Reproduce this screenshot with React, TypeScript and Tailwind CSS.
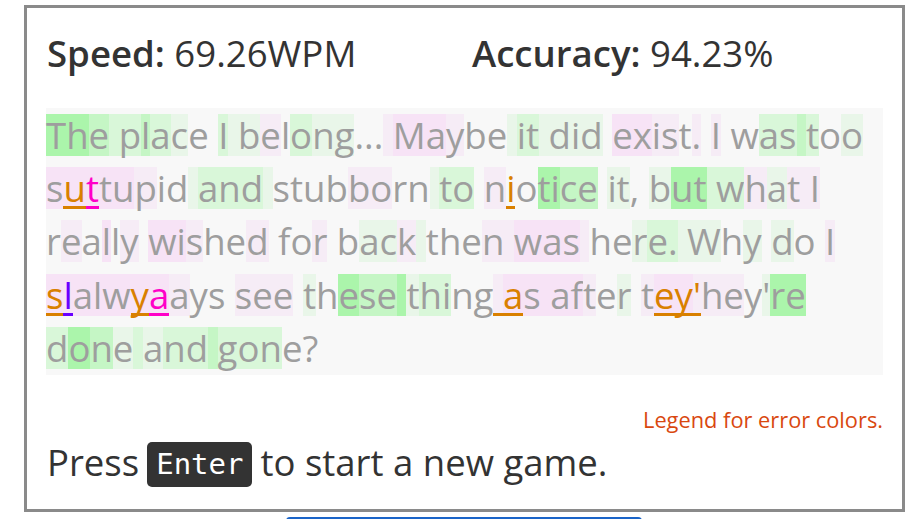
import React from 'react';

// per-character highlight: 3..0 = greens (fast -> slow), P/p = pinks, . = none
const BG: Record<string, string> = {
    '3': 'bg-[#abf5ab]',
    '2': 'bg-[#c5f6c5]',
    '1': 'bg-[#d9f7d9]',
    '0': 'bg-[#e9f6e9]',
    P: 'bg-[#f7e3f6]',
    p: 'bg-[#f6ecf6]',
    '.': '',
};

const ERR: Record<string, string> = {
    o: 'text-[#d98000] shadow-[inset_0_-3px_0_#d98000]',
    m: 'text-[#ff00c8] shadow-[inset_0_-3px_0_#ff00c8]',
    v: 'text-[#6a00ff] shadow-[inset_0_-3px_0_#6a00ff]',
};

const LINES: { text: string; bg: string; err: Record<number, string> }[] = [
    {
        text: 'The place I belong... Maybe it did exist. I was too',
        bg: '33211210..100p.100...pPPp..0110000.PPpp.p.p..1121.0',
        err: {},
    },
    {
        text: 'suttupid and stubborn to niotice it, but what I',
        bg: 'PPPPPp..01110....pp..011.p..3322.00..03311p0ppp',
        err: { 1: 'o', 2: 'm', 26: 'o' },
    },
    {
        text: 'really wished for back then was here. Why do I',
        bg: '.p.P.p.PPp..p...p..00p0...ppPPPp..01100.0.0..p',
        err: {},
    },
    {
        text: "slalwyaays see these thing as after tey'hey're",
        bg: 'PPPPPPPp...ppp.0.3223011..pPPPPPp.0.pPPppp.033',
        err: { 0: 'o', 1: 'v', 5: 'o', 6: 'm', 26: 'o', 27: 'o', 37: 'o', 38: 'o', 39: 'o' },
    },
    {
        text: 'done and gone?',
        bg: '132010112111..',
        err: {},
    },
];

export default function App() {
    return (
        <div className="min-h-screen bg-white pt-[5px] font-['Open_Sans',sans-serif]">
            <div className="ml-[24px] h-[507px] w-[881px] border-[3px] border-[#8a8a8a] px-[19px]">
                {/* Stats */}
                <div className="flex pt-[25px] pb-[35px] pl-[1px] text-[36.6px] leading-[40px] text-[#333]">
                    <div className="w-[425px]">
                        <span className="font-semibold">Speed:</span> 69.26WPM
                    </div>
                    <div>
                        <span className="font-semibold">Accuracy:</span> 94.23%
                    </div>
                </div>

                {/* Typed text */}
                <div className="bg-[#f8f8f8] text-[36.6px] text-[#9e9e9e]">
                    {LINES.map((line, li) => (
                        <div key={li} className="flex h-[53.4px] items-center">
                            {line.text.split('').map((ch, ci) => (
                                <span
                                    key={ci}
                                    className={`inline-block h-[42px] whitespace-pre leading-[42px] ${BG[line.bg[ci]] ?? ''} ${
                                        line.err[ci] ? ERR[line.err[ci]] : ''
                                    }`}
                                >
                                    {ch}
                                </span>
                            ))}
                        </div>
                    ))}
                </div>

                <div className="mt-[30px] text-right text-[21.8px] leading-[30px] text-[#d9480f]">
                    Legend for error colors.
                </div>

                {/* Restart hint */}
                <div className="mt-[7px] flex h-[45px] items-center pl-[1px] text-[36.5px] text-[#333]">
                    <span className="pb-[5px] leading-[40px]">Press</span>
                    <span className="ml-[8px] flex h-[45px] items-center rounded-[5px] bg-[#333] px-[9px] font-['DejaVu_Sans_Mono',monospace] text-[29px] text-white">
                        Enter
                    </span>
                    <span className="ml-[8px] pb-[5px] leading-[40px]">to start a new game.</span>
                </div>
            </div>

            <div className="mt-[5px] ml-[286px] h-[40px] w-[356px] rounded-[4px] border-2 border-[#1a64c8] bg-white" />
        </div>
    );
}
